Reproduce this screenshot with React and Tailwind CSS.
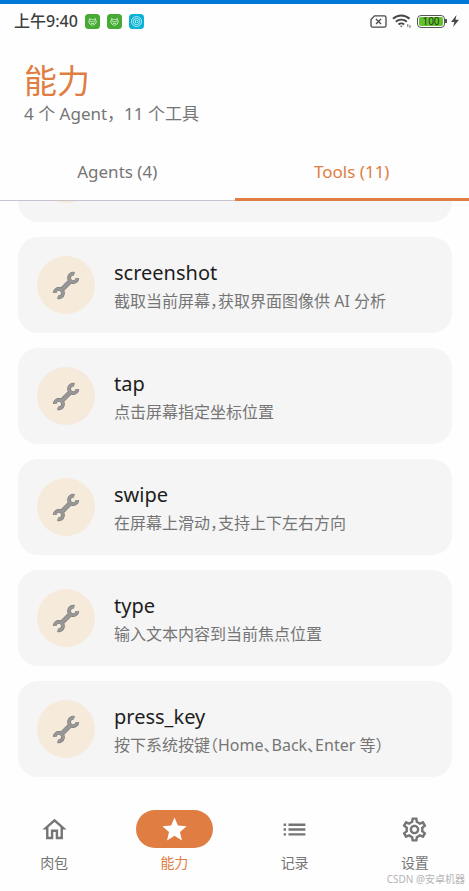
import React, { useState } from 'react'
import { MdList, MdOutlineHome, MdOutlineSettings, MdStar } from 'react-icons/md'

const tools = [
  { name: 'screenshot', description: '截取当前屏幕，获取界面图像供 AI 分析' },
  { name: 'tap', description: '点击屏幕指定坐标位置' },
  { name: 'swipe', description: '在屏幕上滑动，支持上下左右方向' },
  { name: 'type', description: '输入文本内容到当前焦点位置' },
  { name: 'press_key', description: '按下系统按键（Home、Back、Enter 等）' },
]

const tabs = [
  { id: 'agents', label: 'Agents (4)' },
  { id: 'tools', label: 'Tools (11)' },
]

const navItems = [
  { label: '肉包', icon: MdOutlineHome },
  { label: '能力', icon: MdStar, active: true },
  { label: '记录', icon: MdList },
  { label: '设置', icon: MdOutlineSettings },
]

const WrenchIcon = () => (
  <svg viewBox="0 0 28 30" className="w-7 h-[30px]" fill="none" aria-hidden="true">
    <g stroke="#7d7d7d">
      <path d="M8.500 21L19.500 10" strokeWidth="4.800" />
      <path d="M22.300 3.800A4.200 4.200 0 1 0 25.400 8.200" strokeWidth="3.800" />
      <path d="M5.700 27.200A4.200 4.200 0 1 0 2.600 22.800" strokeWidth="3.800" />
    </g>
    <g stroke="#979797">
      <path d="M8.500 21L19.500 10" strokeWidth="3.400" />
      <path d="M22.300 3.800A4.200 4.200 0 1 0 25.400 8.200" strokeWidth="2.600" />
      <path d="M5.700 27.200A4.200 4.200 0 1 0 2.600 22.800" strokeWidth="2.600" />
    </g>
  </svg>
)

const FaceBadge = () => (
  <svg viewBox="0 0 15 15" className="w-[15px] h-[15px]" aria-hidden="true">
    <rect width="15" height="15" rx="3.500" fill="#46aa35" />
    <g fill="none" stroke="#d5f2ce" strokeWidth=".8">
      <path d="M4.800 5.200a3.300 3.300 0 0 0 0 4.800 3.800 3.800 0 0 0 5.400 0 3.300 3.300 0 0 0 0-4.800M4.800 3.800v2.400l1.400-.7h2.600l1.400.7V3.800" />
      <path d="M4.500 7.700h6M6 9.500h3" />
    </g>
  </svg>
)

const SpiralBadge = () => (
  <svg viewBox="0 0 15 15" className="w-[15px] h-[15px]" aria-hidden="true">
    <rect width="15" height="15" rx="3.500" fill="#0bb2d6" />
    <g fill="none" stroke="#d2f5fc" strokeWidth=".8">
      <circle cx="7.500" cy="7.500" r="5" />
      <circle cx="7.500" cy="7.500" r="3.200" />
      <path d="M6.500 9V6.200h1.200a1.300 1.300 0 0 1 0 2.600" />
    </g>
  </svg>
)

const StatusBar = () => (
  <div className="flex items-center justify-between h-[34px] pl-3.5 pr-2.5 text-[#3f3f3f]">
    <div className="flex items-center gap-[7px]">
      <span className="text-base font-medium">上午9:40</span>
      <FaceBadge />
      <FaceBadge />
      <SpiralBadge />
    </div>
    <div className="flex items-center gap-[5px]">
      <svg viewBox="0 0 17 13" className="w-[17px] h-[13px]" fill="none" stroke="#484848" aria-hidden="true">
        <path d="M4.500.9h9.800c1 0 1.700.7 1.700 1.700v7.800c0 1-.7 1.700-1.700 1.700H2.700C1.700 12.100 1 11.400 1 10.400V4.500z" strokeWidth="1.300" />
        <path d="M6 4l5 5M11 4L6 9" strokeWidth="1.300" />
      </svg>
      <svg viewBox="0 0 20 14" className="w-5 h-3.5" fill="none" stroke="#484848" aria-hidden="true">
        <path d="M1 4.800a12 12 0 0 1 16.500 0M3.800 7.800a8 8 0 0 1 11 0M6.500 10.500a4 4 0 0 1 5.600 0" strokeWidth="1.900" />
        <path d="M9.300 13.200l-1.400-1.500h2.800z" fill="#484848" stroke="none" />
        <path d="M15.800 10v3M18 11v3" strokeWidth=".8" />
      </svg>
      <div className="flex items-center">
        <div className="w-7 h-[13px] p-px rounded border border-[#555555]">
          <div className="flex items-center justify-center h-full rounded-xs bg-[#62c22f] text-[10px] leading-none text-[#263a1b]">
            100
          </div>
        </div>
        <div className="w-0.5 h-1 bg-[#555555]" />
        <svg viewBox="0 0 8 12" className="w-2 h-3 ml-1" aria-hidden="true">
          <path d="M5.500 0L0 7h3.300L2.200 12 8 4.700H4.500z" fill="#484848" />
        </svg>
      </div>
    </div>
  </div>
)

const ToolCard = ({ children }) => (
  <li className="flex items-center gap-[19px] h-24 shrink-0 px-[19px] rounded-[20px] bg-[#f5f5f5]">
    <div className="flex items-center justify-center w-[58px] h-[58px] shrink-0 rounded-full bg-[#f6eadb]">
      <WrenchIcon />
    </div>
    {children}
  </li>
)

const App = () => {
  const [activeTab, setActiveTab] = useState('tools')

  return (
    <div className="flex flex-col h-screen border-t-4 border-[#0078d7] bg-[#fefefe] font-['Noto_Sans','Noto_Sans_CJK_SC',sans-serif]">
      <StatusBar />

      {/* Page title */}
      <header className="px-6 pt-[22px] pb-4">
        <h1 className="text-[33px] leading-[42px] text-[#e07d42]">能力</h1>
        <p className="text-[17px] leading-6 text-[#757575]">4 个 Agent，11 个工具</p>
      </header>

      {/* Tabs */}
      <div role="tablist" className="flex h-[59px] shrink-0 border-b border-[#cac4d0]">
        {tabs.map((tab) => (
          <button
            key={tab.id}
            role="tab"
            aria-selected={activeTab === tab.id}
            onClick={() => setActiveTab(tab.id)}
            className={
              activeTab === tab.id
                ? 'flex-1 -mb-px pt-1 border-b-[3px] border-[#e07d42] text-[17px] text-[#e07d42]'
                : 'flex-1 pt-0.5 text-[17px] text-[#757575]'
            }
          >
            {tab.label}
          </button>
        ))}
      </div>

      {/* Tool list, opens scrolled to the end */}
      <main className="flex flex-col-reverse flex-1 min-h-0 overflow-y-auto [scrollbar-width:none]">
        <ul className="flex flex-col gap-[15px] pl-[18px] pr-[17px] pb-3">
          <ToolCard />
          {tools.map((tool) => (
            <ToolCard key={tool.name}>
              <div className="min-w-0 pt-1">
                <h2 className="text-xl leading-7 text-[#1d1d1d]">{tool.name}</h2>
                <p className="text-base leading-7 text-[#757575] whitespace-nowrap [font-feature-settings:'halt']">
                  {tool.description}
                </p>
              </div>
            </ToolCard>
          ))}
        </ul>
      </main>

      {/* Bottom navigation */}
      <nav className="relative flex gap-3 h-[102px] shrink-0 pt-[21px]">
        {navItems.map(({ label, icon: Icon, active }) => (
          <a
            key={label}
            href="#"
            className={
              active
                ? 'flex flex-1 flex-col items-center gap-[5px] text-[#e07d42]'
                : 'flex flex-1 flex-col items-center gap-[5px] text-[#757575]'
            }
          >
            <span
              className={
                active
                  ? 'flex items-center justify-center w-[77px] h-[38px] rounded-full bg-[#e07d42] text-white'
                  : 'flex items-center justify-center w-[77px] h-[38px]'
              }
            >
              <Icon className="w-[29px] h-[29px]" />
            </span>
            <span className="text-sm leading-5">{label}</span>
          </a>
        ))}
        <span className="absolute right-1 bottom-1 text-[10px] leading-4 text-[#b5b5b5]">CSDN @安卓机器</span>
      </nav>
    </div>
  )
}

export default App
